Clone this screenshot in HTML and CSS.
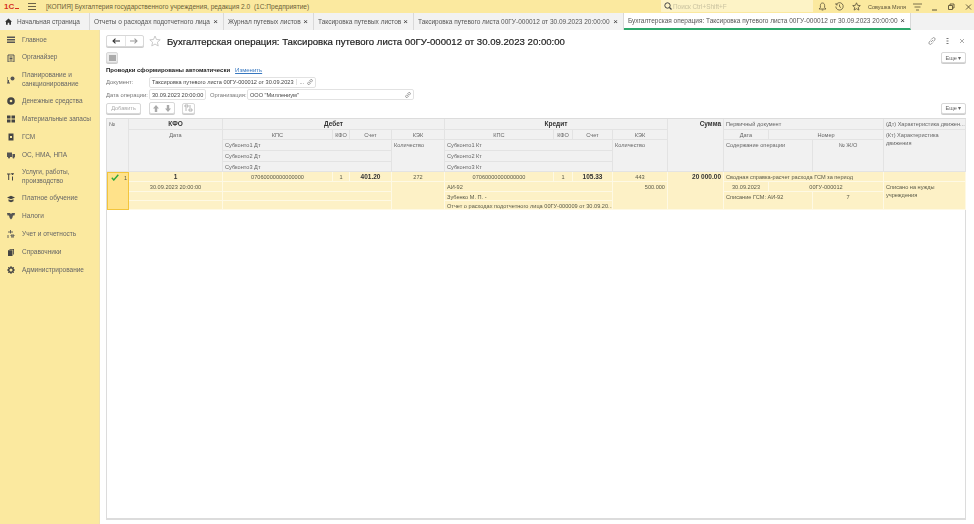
FILE: index.html
```html
<!DOCTYPE html>
<html lang="ru">
<head>
  <meta charset="utf-8">
  <title>Бухгалтерская операция</title>
  <link rel="stylesheet" href="styles.css">
</head>
<body>
  <div class="topbar">
    <span class="logo">1С<i></i></span>
    <svg class="burger" width="8" height="7" viewBox="0 0 8 7"><path d="M0 .5h8M0 3.500h8M0 6.500h8" stroke="#6b6248" fill="none"/></svg>
    <span class="app-title">[КОПИЯ] Бухгалтерия государственного учреждения, редакция 2.0&nbsp; (1С:Предприятие)</span>
    <div class="search">
      <svg width="8" height="8" viewBox="0 0 8 8"><circle cx="3.500" cy="3.500" r="2.700" stroke="#444" fill="none"/><path d="M5.500 5.500L7.500 7.500" stroke="#444" stroke-width="1.200"/></svg>
      <span>Поиск Ctrl+Shift+F</span>
    </div>
    <div class="top-icons">
      <svg width="9" height="9" viewBox="0 0 9 9"><path d="M4.500 1C3 1 2.400 2.200 2.400 3.500V5.500L1 7H8L6.600 5.500V3.500C6.600 2.200 6 1 4.500 1ZM3.700 8H5.300" stroke="#5b5238" stroke-width=".8" fill="none"/></svg>
      <svg width="9" height="9" viewBox="0 0 9 9"><path d="M1.300 2.500A3.700 3.700 0 1 1 .8 4.500M1 1V2.800H2.800M4.500 2.500V4.700L6 5.600" stroke="#5b5238" stroke-width=".8" fill="none"/></svg>
      <svg width="9" height="9" viewBox="0 0 9 9"><path d="M4.500 .8L5.600 3.300 8.300 3.600 6.300 5.400 6.900 8.100 4.500 6.700 2.100 8.100 2.700 5.400 .7 3.600 3.400 3.300Z" stroke="#5b5238" stroke-width=".8" fill="none"/></svg>
      <span class="user">Совушка Миля</span>
      <svg width="9" height="8" viewBox="0 0 9 8"><path d="M0 1h9M1.500 4h6M3 7h3" stroke="#5b5238" stroke-width=".8" fill="none"/></svg>
      <svg class="win" width="6" height="8" viewBox="0 0 6 8"><path d="M0 7h5" stroke="#5b5238" fill="none"/></svg>
      <svg class="win" width="7" height="8" viewBox="0 0 7 8"><path d="M.5 2.500h4v4h-4zM2 2.500V1h4v4H4.500" stroke="#5b5238" stroke-width=".9" fill="none"/></svg>
      <svg class="win" width="7" height="8" viewBox="0 0 7 8"><path d="M1 1.500l5 5M6 1.500l-5 5" stroke="#5b5238" stroke-width=".9" fill="none"/></svg>
    </div>
  </div>

  <div class="tabs">
    <div class="tab tab-home">
      <svg width="7" height="7" viewBox="0 0 7 7"><path d="M3.500 .5L7 3.700H6V6.800H4.300V4.700H2.700V6.800H1V3.700H0Z" fill="#333"/></svg>
      <span>Начальная страница</span>
    </div>
    <div class="tab tab-a"><span>Отчеты о расходах подотчетного лица</span><b>×</b></div>
    <div class="tab tab-b"><span>Журнал путевых листов</span><b>×</b></div>
    <div class="tab tab-c"><span>Таксировка путевых листов</span><b>×</b></div>
    <div class="tab tab-d"><span>Таксировка путевого листа 00ГУ-000012 от 30.09.2023 20:00:00</span><b>×</b></div>
    <div class="tab tab-e active"><span>Бухгалтерская операция: Таксировка путевого листа 00ГУ-000012 от 30.09.2023 20:00:00</span><b>×</b></div>
  </div>

  <div class="workspace">
    <nav class="sidebar">
      <a class="nav-item"><svg viewBox="0 0 8 8"><path d="M0 .5h8v1.500H0zM0 3h8v1.500H0zM0 5.500h8V7H0z" fill="#555"/></svg><span>Главное</span></a>
      <a class="nav-item"><svg viewBox="0 0 8 8"><path d="M1 1h6v7H1zM2.500 3h3M2.500 4.500h3M2.500 6h3" stroke="#555" fill="none"/></svg><span>Органайзер</span></a>
      <a class="nav-item two"><svg viewBox="0 0 8 8"><circle cx="5.500" cy="2.500" r="2" fill="#555"/><path d="M0 1v6M0 7h3M1.500 4v3" stroke="#555" fill="none"/></svg><span>Планирование и<br>санкционирование</span></a>
      <a class="nav-item"><svg viewBox="0 0 8 8"><circle cx="4" cy="4" r="3.800" fill="#444"/><circle cx="4" cy="4" r="1.300" fill="#fbe99f"/></svg><span>Денежные средства</span></a>
      <a class="nav-item"><svg viewBox="0 0 8 8"><path d="M0 .5h3.500V3.500H0zM4.500 .5H8V3.500H4.500zM0 4.500h3.500v3H0zM4.500 4.500H8v3H4.500z" fill="#444"/></svg><span>Материальные запасы</span></a>
      <a class="nav-item"><svg viewBox="0 0 8 8"><path d="M1.500 .5h5v7h-5z" fill="#444"/><path d="M3 3h2v2H3z" fill="#fbe99f"/></svg><span>ГСМ</span></a>
      <a class="nav-item"><svg viewBox="0 0 8 8"><path d="M0 1.500h5v4.500H0zM5.500 3H8v3H5.500z" fill="#555"/><circle cx="2" cy="6.500" r="1" fill="#555"/><circle cx="6.500" cy="6.500" r="1" fill="#555"/></svg><span>ОС, НМА, НПА</span></a>
      <a class="nav-item two"><svg viewBox="0 0 8 8"><path d="M0 1h3.500M1.700 1v6M5.500 3.500v4M5.500 .5v1.500M4 .8h3" stroke="#444" fill="none"/></svg><span>Услуги, работы,<br>производство</span></a>
      <a class="nav-item"><svg viewBox="0 0 8 8"><path d="M0 2.500L4 .8l4 1.700-4 1.700zM1.500 4.200v2L4 7.200l2.500-1v-2L4 5.200z" fill="#444"/></svg><span>Платное обучение</span></a>
      <a class="nav-item"><svg viewBox="0 0 8 8"><path d="M0 1h3l1 1 1-1h3l-.5 2.500H6L5.300 6 4 7.500 2.700 6 2 3.500H.5z" fill="#555"/></svg><span>Налоги</span></a>
      <a class="nav-item"><svg viewBox="0 0 8 8"><path d="M3.500 0v3.500M1 2h5M1 5v3M4 5h3v1H4zM4 7h3" stroke="#555" stroke-width=".9" fill="none"/></svg><span>Учет и отчетность</span></a>
      <a class="nav-item"><svg viewBox="0 0 8 8"><path d="M1 2.200h4.500V8H1zM2.500 1h4.500v5.500H6.200V1.700H2.500z" fill="#444"/></svg><span>Справочники</span></a>
      <a class="nav-item"><svg viewBox="0 0 8 8"><circle cx="4" cy="4" r="2.300" stroke="#444" stroke-width="1.500" fill="none"/><path d="M4 0v1.500M4 6.500V8M0 4h1.500M6.500 4H8M1.200 1.200l1 1M5.800 5.800l1 1M6.800 1.200l-1 1M2.200 5.800l-1 1" stroke="#444" fill="none"/></svg><span>Администрирование</span></a>
    </nav>

    <main class="form">
      <div class="form-head">
        <div class="btn-group nav-arrows">
          <button class="arrow"><svg width="8" height="6" viewBox="0 0 8 6"><path d="M8 3H1.500M3.500 .7L1 3l2.500 2.300" stroke="#333" stroke-width="1.100" fill="none"/></svg></button>
          <button class="arrow dim"><svg width="8" height="6" viewBox="0 0 8 6"><path d="M0 3h6.500M4.500 .7L7 3 4.500 5.300" stroke="#999" stroke-width="1.100" fill="none"/></svg></button>
        </div>
        <svg class="star" width="12" height="12" viewBox="0 0 12 12"><path d="M6 1L7.500 4.500 11.200 4.800 8.400 7.200 9.200 11 6 9 2.800 11 3.600 7.200 .8 4.800 4.500 4.500Z" stroke="#c9c9c9" fill="none"/></svg>
        <h1>Бухгалтерская операция: Таксировка путевого листа 00ГУ-000012 от 30.09.2023 20:00:00</h1>
        <div class="head-icons">
          <svg width="8" height="8" viewBox="0 0 8 8"><path d="M3 5L5 3M3.200 2.500L4.700 1a1.300 1.300 0 0 1 2 2L5.500 4.500M4.800 5.500L3.300 7a1.300 1.300 0 0 1-2-2L2.500 3.500" stroke="#777" stroke-width=".7" fill="none"/></svg>
          <svg width="3" height="8" viewBox="0 0 3 8"><path d="M.5 1h2v1h-2zM.5 3.500h2v1h-2zM.5 6h2v1h-2z" fill="#777"/></svg>
          <svg width="6" height="8" viewBox="0 0 6 8"><path d="M1 2l4 4M5 2L1 6" stroke="#888" stroke-width=".7" fill="none"/></svg>
        </div>
      </div>

      <div class="form-bar">
        <button class="btn square"><i class="grid-icon"></i></button>
        <button class="btn more">Еще ▾</button>
      </div>

      <div class="posting-line">
        <b>Проводки сформированы автоматически</b>
        <a>Изменить</a>
      </div>

      <div class="field-row doc-row">
        <label class="lbl">Документ:</label>
        <div class="input doc-input">
          <span>Таксировка путевого листа 00ГУ-000012 от 30.09.2023</span>
          <em>...</em>
          <svg width="6" height="6" viewBox="0 0 8 8"><path d="M3 5L5 3M3.200 2.500L4.700 1a1.300 1.300 0 0 1 2 2L5.500 4.500M4.800 5.500L3.300 7a1.300 1.300 0 0 1-2-2L2.500 3.500" stroke="#777" fill="none"/></svg>
        </div>
      </div>

      <div class="field-row">
        <label class="lbl">Дата операции:</label>
        <div class="input date-input"><span>30.09.2023 20:00:00</span></div>
        <label class="lbl org-lbl">Организация:</label>
        <div class="input org-input">
          <span>ООО "Миллениум"</span>
          <svg width="6" height="6" viewBox="0 0 8 8"><path d="M3 5L5 3M3.200 2.500L4.700 1a1.300 1.300 0 0 1 2 2L5.500 4.500M4.800 5.500L3.300 7a1.300 1.300 0 0 1-2-2L2.500 3.500" stroke="#777" fill="none"/></svg>
        </div>
      </div>

      <div class="table-bar">
        <button class="btn add">Добавить</button>
        <div class="btn-group updown">
          <button class="arrow"><svg width="6" height="7" viewBox="0 0 6 7"><path d="M3 0L6 3.500H4.200V7H1.800V3.500H0Z" fill="#aaa"/></svg></button>
          <button class="arrow"><svg width="6" height="7" viewBox="0 0 6 7"><path d="M3 7L6 3.500H4.200V0H1.800V3.500H0Z" fill="#aaa"/></svg></button>
        </div>
        <button class="btn kt-btn"><svg width="9" height="8" viewBox="0 0 9 8"><path d="M1 1h3v2H1zM5 5h3v2H5zM6 1v3M2 4v3" stroke="#999" stroke-width=".7" fill="none"/></svg></button>
        <button class="btn more">Еще ▾</button>
      </div>

      <div class="table-box">
        <div class="grid head">
          <div class="cell g-no rows-all">№</div>
          <div class="cell g-kfo r1 bold center">КФО</div>
          <div class="cell g-kfo r2-5 center">Дата</div>
          <div class="cell g-deb r1 bold center">Дебет</div>
          <div class="cell g-kps r2 center">КПС</div>
          <div class="cell g-kf r2 center">КФО</div>
          <div class="cell g-sch r2 center">Счет</div>
          <div class="cell g-kek r2 center">КЭК</div>
          <div class="cell g-sub r3">Субконто1 Дт</div>
          <div class="cell g-sub r4">Субконто2 Дт</div>
          <div class="cell g-sub r5">Субконто3 Дт</div>
          <div class="cell g-kek r3-5">Количество</div>
          <div class="cell g-kre r1 bold center">Кредит</div>
          <div class="cell g-kps2 r2 center">КПС</div>
          <div class="cell g-kf2 r2 center">КФО</div>
          <div class="cell g-sch2 r2 center">Счет</div>
          <div class="cell g-kek2 r2 center">КЭК</div>
          <div class="cell g-sub2 r3">Субконто1 Кт</div>
          <div class="cell g-sub2 r4">Субконто2 Кт</div>
          <div class="cell g-sub2 r5">Субконто3 Кт</div>
          <div class="cell g-kek2 r3-5">Количество</div>
          <div class="cell g-sum rows-all bold right">Сумма</div>
          <div class="cell g-doc r1">Первичный документ</div>
          <div class="cell g-date r2 center">Дата</div>
          <div class="cell g-num r2 center">Номер</div>
          <div class="cell g-text r3-5">Содержание операции</div>
          <div class="cell g-jo r3-5 center">№ Ж/О</div>
          <div class="cell g-char r1">(Дт) Характеристика движен...</div>
          <div class="cell g-char r2-5 wrap">(Кт) Характеристика движения</div>
        </div>

        <div class="grid data">
          <div class="cell g-no rows-all selected">
            <svg width="8" height="7" viewBox="0 0 8 7"><path d="M.8 3.800L2.800 6 7.300 .8" stroke="#2ea83c" stroke-width="1.400" fill="none"/></svg>
            <span>1</span>
          </div>
          <div class="cell g-kfo r1 bold center">1</div>
          <div class="cell g-kfo r2 center">30.09.2023 20:00:00</div>
          <div class="cell g-kfo r3"></div>
          <div class="cell g-kfo r4"></div>
          <div class="cell g-kps r1 center">07060000000000000</div>
          <div class="cell g-kf r1 center">1</div>
          <div class="cell g-sch r1 bold center">401.20</div>
          <div class="cell g-kek r1 center">272</div>
          <div class="cell g-sub r2"></div>
          <div class="cell g-sub r3"></div>
          <div class="cell g-sub r4"></div>
          <div class="cell g-kek r2-4"></div>
          <div class="cell g-kps2 r1 center">07060000000000000</div>
          <div class="cell g-kf2 r1 center">1</div>
          <div class="cell g-sch2 r1 bold center">105.33</div>
          <div class="cell g-kek2 r1 center">443</div>
          <div class="cell g-sub2 r2">АИ-92</div>
          <div class="cell g-sub2 r3">Зубенко М. П. -</div>
          <div class="cell g-sub2 r4">Отчет о расходах подотчетного лица 00ГУ-000009 от 30.09.20...</div>
          <div class="cell g-kek2 r2-4 right">500.000</div>
          <div class="cell g-sum rows-all bold right">20 000.00</div>
          <div class="cell g-doc r1">Сводная справка-расчет расхода ГСМ за период</div>
          <div class="cell g-date r2 center">30.09.2023</div>
          <div class="cell g-num r2 center">00ГУ-000012</div>
          <div class="cell g-text r3-4">Списание ГСМ: АИ-92</div>
          <div class="cell g-jo r3-4 center">7</div>
          <div class="cell g-char r1"></div>
          <div class="cell g-char r2-4 wrap">Списано на нужды учреждения</div>
        </div>
      </div>
    </main>
  </div>
</body>
</html>
```

FILE: styles.css
```css
* {
  box-sizing: border-box;
}

html, body {
  height: 100%;
}

body {
  margin: 0;
  display: flex;
  flex-direction: column;
  overflow: hidden;
  background: white;
  color: #333;
  font-family: 'Liberation Sans', Arial, sans-serif;
  font-size: 5.600px;
  filter: blur(0.35px);
}

button {
  font-family: inherit;
  padding: 0;
  cursor: pointer;
}

/* top bar */
.topbar {
  height: 13px;
  flex: none;
  display: flex;
  align-items: center;
  background: #fbe99f;
}

.logo {
  width: 17px;
  margin-left: 4px;
  color: #d6301f;
  font-size: 8px;
  font-weight: bold;
  line-height: 8px;
}

.logo i {
  display: inline-block;
  width: 4px;
  height: 1px;
  margin-left: 1px;
  background: #d6301f;
}

.burger {
  margin-left: 7px;
}

.app-title {
  margin-left: 10px;
  font-size: 6.600px;
  color: #6b5f38;
  white-space: nowrap;
}

.search {
  position: absolute;
  left: 661px;
  top: 0;
  width: 152px;
  height: 12px;
  display: flex;
  align-items: center;
  gap: 1px;
  padding-left: 3px;
  background: #fdf3c6;
  color: #c9c2a0;
  font-size: 6.400px;
}

.top-icons {
  position: absolute;
  left: 818px;
  top: 1px;
  height: 11px;
  display: flex;
  align-items: center;
  gap: 8px;
}

.user {
  font-size: 5.500px;
  color: #5b5238;
  margin-left: -1px;
  margin-right: -1px;
  white-space: nowrap;
}

.win {
  margin-left: 2px;
}

/* tabs */
.tabs {
  height: 17px;
  flex: none;
  display: flex;
  background: #f2f2f2;
}

.tab {
  display: flex;
  align-items: center;
  justify-content: space-between;
  padding: 0 5px 0 4px;
  border-right: 1px solid #d9d9d9;
  font-size: 6.500px;
  color: #555;
  white-space: nowrap;
}

.tab b {
  font-size: 8px;
  font-weight: normal;
  color: #333;
}

.tab-home { width: 90px; justify-content: flex-start; gap: 5px; padding-left: 5px; }
.tab-a { width: 134px; }
.tab-b { width: 90px; }
.tab-c { width: 100px; }
.tab-d { width: 210px; }
.tab-e { width: 287px; }

.tab.active {
  background: white;
  border-bottom: 2px solid #2ea86b;
}

/* sidebar */
.workspace {
  flex: 1;
  display: flex;
  min-height: 0;
}

.sidebar {
  width: 100px;
  flex: none;
  padding-top: 1px;
  background: #fbe99f;
  border-right: 1px solid #efe2ad;
}

.nav-item {
  height: 17.800px;
  display: flex;
  align-items: center;
  gap: 7px;
  padding-left: 7px;
  font-size: 6.500px;
  line-height: 8.500px;
  color: #666;
}

.nav-item.two {
  height: 26px;
}

.nav-item svg {
  width: 8px;
  height: 8px;
  flex: none;
}

/* form */
.form {
  flex: 1;
  display: flex;
  flex-direction: column;
  padding: 0 8px 4px 6px;
  min-width: 0;
}

.form-head {
  height: 22px;
  flex: none;
  display: flex;
  align-items: center;
}

.btn-group {
  display: flex;
  height: 12px;
  border: 1px solid #d8d8d8;
  border-radius: 2px;
  box-shadow: 0 1px 0 #ccc;
  background: white;
}

.arrow {
  flex: 1;
  height: 100%;
  border: none;
  background: none;
  display: flex;
  align-items: center;
  justify-content: center;
}

.arrow.dim {
  border-left: 1px solid #e5e5e5;
}

.nav-arrows {
  width: 38px;
}

.star {
  margin-left: 5px;
}

h1 {
  margin: 0 0 0 6px;
  font-size: 9.600px;
  font-weight: normal;
  -webkit-text-stroke: 0.2px #222;
  color: #222;
  white-space: nowrap;
}

.head-icons {
  margin-left: auto;
  padding-right: 1px;
  display: flex;
  align-items: center;
  gap: 10px;
}

.form-bar {
  height: 12px;
  flex: none;
  display: flex;
  justify-content: space-between;
}

.btn {
  height: 11px;
  border: 1px solid #d8d8d8;
  border-radius: 2px;
  box-shadow: 0 1px 0 #ccc;
  background: white;
  font-size: 5.600px;
  color: #666;
}

.square {
  width: 12px;
  background: #ededed;
  display: flex;
  align-items: center;
  justify-content: center;
}

.grid-icon {
  width: 7px;
  height: 6px;
  background: #aaa;
}

.more {
  width: 25px;
}

.posting-line {
  height: 12px;
  flex: none;
  display: flex;
  align-items: center;
  gap: 5px;
  font-size: 6px;
  color: #222;
}

.posting-line a {
  color: #3878c0;
  text-decoration: underline;
}

.field-row {
  height: 13px;
  flex: none;
  display: flex;
  align-items: center;
}

.doc-row {
  height: 12px;
}

.lbl {
  width: 43px;
  flex: none;
  font-size: 5.800px;
  color: #777;
  white-space: nowrap;
}

.input {
  height: 11px;
  flex: none;
  display: flex;
  align-items: center;
  padding-left: 2px;
  border: 1px solid #e2e2e2;
  border-radius: 2px;
  color: #444;
  white-space: nowrap;
}

.input em {
  margin-left: 2px;
  padding: 0 3px;
  border-left: 1px solid #e2e2e2;
  font-style: normal;
}

.input svg {
  flex: none;
  margin-left: auto;
  margin-right: 2px;
}

.doc-input { width: 167px; }
.date-input { width: 57px; }
.org-lbl { width: 37px; margin-left: 4px; }
.org-input { width: 167px; }

.table-bar {
  height: 14px;
  margin-bottom: 3px;
  flex: none;
  display: flex;
  align-items: center;
}

.add {
  width: 35px;
  color: #aaa;
}

.updown {
  width: 26px;
  margin-left: 8px;
}

.kt-btn {
  width: 13px;
  margin-left: 7px;
}

.table-bar .more {
  margin-left: auto;
}

/* table */
.table-box {
  flex: 1;
  border: 1px solid #dcdcdc;
  border-bottom-width: 2px;
  min-height: 0;
}

.grid {
  display: grid;
  grid-template-columns: 22px 94px 110px 17px 42px 53px 109px 19px 40px 55px 56px 45px 44px 71px 82px;
}

.head {
  grid-template-rows: 11px 10px 11px 11px 10px;
  background: #f1f1f1;
}

.data {
  grid-template-rows: 10px 10px 9px 9px;
  background: #fdf1c6;
}

.cell {
  padding: 1px 2px 0;
  line-height: 8px;
  color: #666;
  border-right: 1px solid #e3e3e3;
  border-bottom: 1px solid #e3e3e3;
  white-space: nowrap;
  overflow: hidden;
}

.data .cell {
  color: #5a5a48;
  border-color: #fef9e4;
}

.bold {
  font-size: 6.500px;
  font-weight: bold;
}

.cell.bold, .data .cell.bold {
  color: #333;
}

.center { text-align: center; }
.right { text-align: right; }
.wrap { white-space: normal; }

.g-no { grid-column: 1 / 2; }
.g-kfo { grid-column: 2 / 3; }
.g-deb { grid-column: 3 / 7; }
.g-kps { grid-column: 3 / 4; }
.g-kf { grid-column: 4 / 5; }
.g-sch { grid-column: 5 / 6; }
.g-kek { grid-column: 6 / 7; }
.g-sub { grid-column: 3 / 6; }
.g-kre { grid-column: 7 / 11; }
.g-kps2 { grid-column: 7 / 8; }
.g-kf2 { grid-column: 8 / 9; }
.g-sch2 { grid-column: 9 / 10; }
.g-kek2 { grid-column: 10 / 11; }
.g-sub2 { grid-column: 7 / 10; }
.g-sum { grid-column: 11 / 12; }
.g-doc { grid-column: 12 / 15; }
.g-date { grid-column: 12 / 13; }
.g-num { grid-column: 13 / 15; }
.g-text { grid-column: 12 / 14; }
.g-jo { grid-column: 14 / 15; }
.g-char { grid-column: 15 / 16; }

.r1 { grid-row: 1; }
.r2 { grid-row: 2; }
.r3 { grid-row: 3; }
.r4 { grid-row: 4; }
.r5 { grid-row: 5; }
.r2-5 { grid-row: 2 / 6; }
.r3-5 { grid-row: 3 / 6; }
.r2-4 { grid-row: 2 / 5; }
.r3-4 { grid-row: 3 / 5; }
.rows-all { grid-row: 1 / -1; }

.selected {
  display: flex;
  align-items: flex-start;
  justify-content: space-between;
  padding: 1px 1px 0 3px;
  background: #ffe28a;
  border: 1px solid #f3c53c !important;
}
```
